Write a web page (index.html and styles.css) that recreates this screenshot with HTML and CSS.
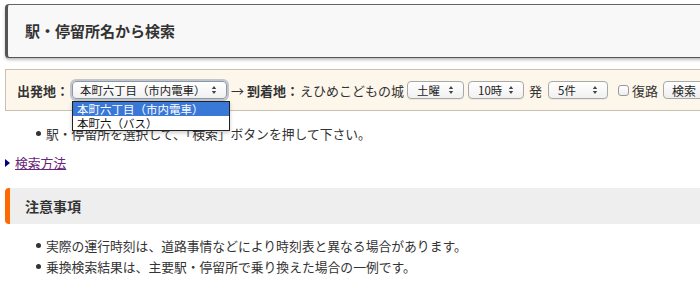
FILE: index.html
```html
<!DOCTYPE html>
<html lang="ja">
<head>
<meta charset="utf-8">
<link rel="stylesheet" href="styles.css">
</head>
<body>
<div class="page">
  <h1 class="head-main">駅・停留所名から検索</h1>

  <form class="search-box">
    <span class="lbl">出発地：</span>
    <span class="sel sel-from focus">本町六丁目（市内電車）<svg class="arr" viewBox="0 0 6 10" width="6" height="10"><path d="M3 1 L5.2 4 H0.8 Z M3 9 L5.2 6 H0.8 Z" fill="#444"/></svg>
      <span class="dropdown">
        <span class="opt opt-on">本町六丁目（市内電車）</span>
        <span class="opt">本町六（バス）</span>
      </span>
    </span>
    <span class="arrow-txt">→</span>
    <span class="lbl lbl-to">到着地：</span>
    <span class="dest">えひめこどもの城</span>
    <span class="sel sel-day">土曜<svg class="arr" viewBox="0 0 6 10" width="6" height="10"><path d="M3 1 L5.2 4 H0.8 Z M3 9 L5.2 6 H0.8 Z" fill="#444"/></svg></span>
    <span class="sel sel-hour">10時<svg class="arr" viewBox="0 0 6 10" width="6" height="10"><path d="M3 1 L5.2 4 H0.8 Z M3 9 L5.2 6 H0.8 Z" fill="#444"/></svg></span>
    <span class="hatsu">発</span>
    <span class="sel sel-count">5件<svg class="arr" viewBox="0 0 6 10" width="6" height="10"><path d="M3 1 L5.2 4 H0.8 Z M3 9 L5.2 6 H0.8 Z" fill="#444"/></svg></span>
    <span class="chk"></span>
    <span class="fukuro">復路</span>
    <span class="btn">検索</span>
  </form>

  <ul class="notes notes-top">
    <li>駅・停留所を選択して、「検索」ボタンを押して下さい。</li>
  </ul>

  <p class="howto"><span class="tri"></span><a href="#" class="howto-link">検索方法</a></p>

  <h2 class="head-sub">注意事項</h2>

  <ul class="notes notes-bottom">
    <li>実際の運行時刻は、道路事情などにより時刻表と異なる場合があります。</li>
    <li>乗換検索結果は、主要駅・停留所で乗り換えた場合の一例です。</li>
  </ul>
</div>
</body>
</html>
```

FILE: styles.css
```css
html, body {
  margin: 0;
  padding: 0;
  background: #fff;
  overflow: hidden;
}
body {
  font-family: "Noto Sans CJK JP", "Noto Sans", sans-serif;
  color: #333;
}
.page {
  width: 760px;
  padding-left: 5px;
  padding-top: 4px;
}
.head-main {
  margin: 0;
  height: 52px;
  box-sizing: content-box;
  border-top: 1px solid #666;
  border-bottom: 1px solid #555;
  border-left: 3px solid #555;
  border-radius: 4px 0 0 4px;
  background: #f8f8f8;
  box-shadow: 0 2px 3px rgba(0,0,0,0.25);
  padding-left: 17px;
  font-size: 15px;
  font-weight: bold;
  line-height: 52px;
  color: #333;
}
.search-box {
  margin: 11px 0 0 0;
  height: 40px;
  border: 1px solid #c9c0b2;
  border-right: none;
  background: #fdf6ea;
  display: flex;
  align-items: center;
  padding: 0 0 0 11px;
  font-size: 13px;
  white-space: nowrap;
  color: #333;
}
.lbl {
  font-weight: bold;
}
.sel {
  position: relative;
  display: flex;
  align-items: center;
  box-sizing: border-box;
  height: 18px;
  border: 1px solid #a8a8a8;
  border-radius: 4px;
  background: linear-gradient(#ffffff, #f1f1f1);
  font-size: 11.4px;
  color: #222;
  padding-left: 8px;
  box-shadow: 0 1px 0 rgba(0,0,0,0.05);
}
.sel .arr {
  position: absolute;
  right: 9px;
  top: 3px;
}
.sel-from {
  width: 155px;
  margin-left: 3px;
  padding-left: 7px;
}
.focus {
  box-shadow: 0 0 0 2px rgba(120,140,170,0.45);
  border-color: #8a97a8;
}
.dropdown {
  position: absolute;
  left: -1px;
  top: 19px;
  width: 156px;
  background: #fff;
  border: 1px solid #222;
  display: flex;
  flex-direction: column;
  z-index: 5;
  box-shadow: 0 2px 4px rgba(0,0,0,0.2);
}
.opt {
  height: 14px;
  line-height: 14px;
  font-size: 11.5px;
  padding-left: 4px;
  color: #111;
}
.opt-on {
  background: #3a78d8;
  color: #fff;
}
.arrow-txt {
  margin-left: 4px;
}
.lbl-to {
  margin-left: 3px;
}
.dest {
  margin-left: 1px;
}
.sel-day {
  width: 57px;
  margin-left: 3px;
  padding-left: 9px;
}
.sel-hour {
  width: 56px;
  margin-left: 4px;
  padding-left: 9px;
}
.hatsu {
  margin-left: 5px;
}
.sel-count {
  width: 60px;
  margin-left: 6px;
  padding-left: 9px;
}
.chk {
  display: inline-block;
  width: 11px;
  height: 11px;
  box-sizing: border-box;
  border: 1px solid #999;
  border-radius: 3px;
  background: linear-gradient(#fff, #eee);
  margin-left: 10px;
}
.fukuro {
  margin-left: 3px;
}
.btn {
  display: flex;
  align-items: center;
  box-sizing: border-box;
  height: 18px;
  width: 48px;
  margin-left: 5px;
  border: 1px solid #a8a8a8;
  border-radius: 4px;
  background: linear-gradient(#ffffff, #eeeeee);
  font-size: 12px;
  padding-left: 8px;
  color: #222;
}
.notes {
  list-style: none;
  margin: 0;
  padding: 0 0 0 41px;
  font-size: 12.8px;
  line-height: 21px;
  color: #333;
}
.notes li {
  position: relative;
}
.notes li::before {
  content: "";
  position: absolute;
  left: -10px;
  top: 8px;
  width: 5px;
  height: 5px;
  border-radius: 50%;
  background: #333;
}
.notes-top {
  margin-top: 12px;
}
.howto {
  margin: 9px 0 0 0;
  display: flex;
  align-items: center;
  font-size: 12.8px;
  line-height: 20px;
}
.tri {
  width: 0;
  height: 0;
  border-top: 4.5px solid transparent;
  border-bottom: 4.5px solid transparent;
  border-left: 5px solid #000080;
  margin-right: 5px;
}
.howto-link {
  color: #66247a;
  text-decoration: underline;
}
.head-sub {
  margin: 15px 0 0 0;
  height: 36px;
  border-left: 5px solid #ff6a00;
  border-radius: 4px 0 0 4px;
  background: #eeeeee;
  padding-left: 15px;
  font-size: 14px;
  font-weight: bold;
  line-height: 36px;
  color: #333;
}
.notes-bottom {
  margin-top: 11px;
}
```
